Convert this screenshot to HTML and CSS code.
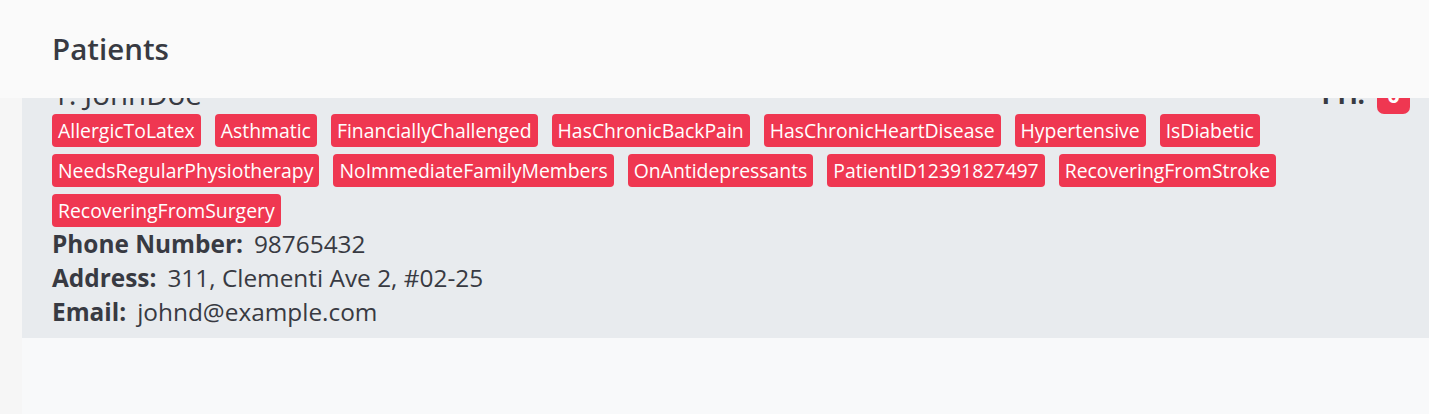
FILE: index.html
```html
<!DOCTYPE html>
<html lang="en">
<head>
<meta charset="utf-8">
<title>Patients</title>
<link rel="stylesheet" href="styles.css">
</head>
<body>
  <header class="page-header">
    <h1 class="title">Patients</h1>
  </header>
  <main class="main">
    <div class="side-strip"></div>
    <section class="list-panel">
      <div class="viewport">
        <article class="card">
          <div class="card-head">
            <div class="name">1. JohnDoe</div>
            <div class="pri">
              <span class="pri-label">Pri:</span>
              <span class="pri-badge">0</span>
            </div>
          </div>
          <div class="tags">
            <span class="tag">AllergicToLatex</span>
            <span class="tag">Asthmatic</span>
            <span class="tag">FinanciallyChallenged</span>
            <span class="tag">HasChronicBackPain</span>
            <span class="tag">HasChronicHeartDisease</span>
            <span class="tag">Hypertensive</span>
            <span class="tag">IsDiabetic</span>
            <span class="tag">NeedsRegularPhysiotherapy</span>
            <span class="tag">NoImmediateFamilyMembers</span>
            <span class="tag">OnAntidepressants</span>
            <span class="tag">PatientID12391827497</span>
            <span class="tag">RecoveringFromStroke</span>
            <span class="tag">RecoveringFromSurgery</span>
          </div>
          <div class="details">
            <div class="row"><span class="label">Phone Number:</span><span class="value">98765432</span></div>
            <div class="row"><span class="label">Address:</span><span class="value">311, Clementi Ave 2, #02-25</span></div>
            <div class="row"><span class="label">Email:</span><span class="value">johnd@example.com</span></div>
          </div>
        </article>
      </div>
    </section>
  </main>
</body>
</html>
```
FILE: styles.css
```css
* { box-sizing: border-box; }

html, body {
  margin: 0;
  padding: 0;
  height: 100%;
}

body {
  background: #fafafa;
  font-family: "Open Sans", "Noto Sans", sans-serif;
  color: #383a42;
  display: flex;
  flex-direction: column;
  overflow: hidden;
}

.page-header {
  height: 98px;
  padding-left: 52px;
  display: flex;
  align-items: center;
  flex-shrink: 0;
}

.title {
  margin: 0;
  font-size: 29.5px;
  font-weight: 600;
  line-height: 1;
}

.main {
  flex: 1;
  display: flex;
}

.side-strip {
  width: 22px;
  background: #f6f6f6;
}

.list-panel {
  flex: 1;
  background: #f8f9fa;
}

.viewport {
  height: 240px;
  overflow: hidden;
}

.card {
  background: #e8ebee;
  margin-top: -32px;
  padding: 10px 19px 20px 30px;
}

.card-head {
  display: flex;
  justify-content: space-between;
  align-items: center;
  height: 36px;
}

.name {
  font-size: 29.5px;
  line-height: 36px;
  font-weight: 500;
}

.pri {
  display: flex;
  align-items: center;
  gap: 12px;
}

.pri-label {
  font-size: 26px;
  font-weight: 700;
}

.pri-badge {
  background: #ef3751;
  color: #fff;
  font-size: 22px;
  font-weight: 700;
  border-radius: 7px;
  width: 33px;
  height: 40px;
  display: flex;
  align-items: center;
  justify-content: center;
}

.tags {
  display: flex;
  flex-wrap: wrap;
  gap: 7px 14px;
  margin-top: 2px;
}

.tag {
  background: #ef3751;
  color: #fff;
  font-size: 19.4px;
  line-height: 33px;
  height: 33px;
  padding: 0 6px;
  border-radius: 4px;
}

.details {
  font-size: 24.4px;
  line-height: 34px;
}

.row {
  display: flex;
  gap: 11px;
}

.label {
  font-weight: 700;
}
```
